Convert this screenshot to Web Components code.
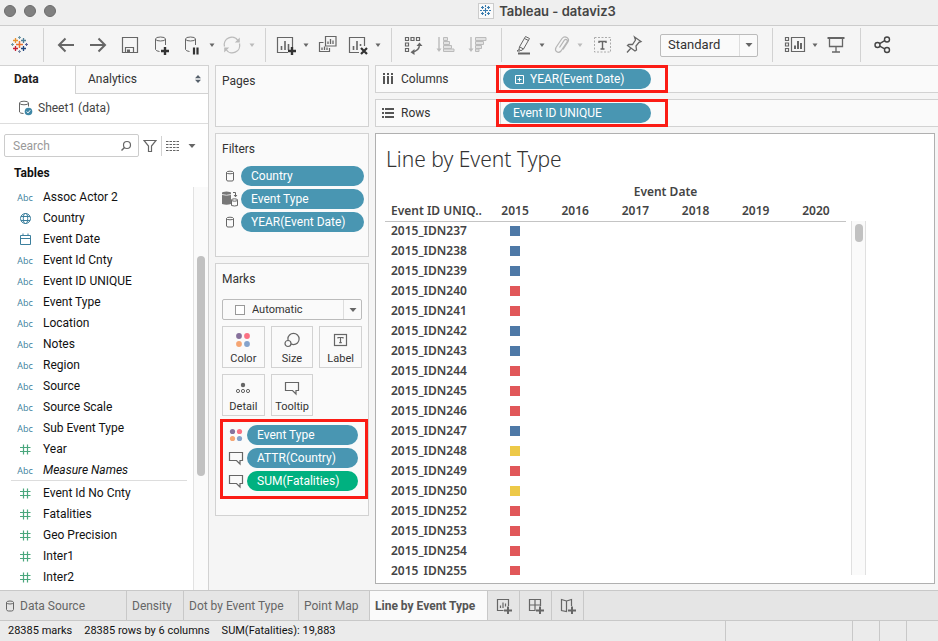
<!DOCTYPE html>
<html lang="en">
<head>
<meta charset="utf-8">
<title>Tableau - dataviz3</title>
<style>
  html, body { height: 100%; margin: 0; }
  body { font: 12px/16px Roboto, "Liberation Sans", sans-serif; color: #333; background: #f5f5f5; overflow: hidden; }
</style>
</head>
<body>
<workbook-app></workbook-app>

<script>
const ICONS = {
  app: [24, 24, `<path stroke="#eb7330" stroke-width="1.500" d="M12.500 8v7M9 11.500h7"/><g stroke-width="1.300">
    <path stroke="#e8912d" d="M8.500 5v5M6 7.500h5"/><path stroke="#4f7f97" d="M16.500 5v5M14 7.500h5"/>
    <path stroke="#c72035" d="M8.500 13v5M6 15.500h5"/><path stroke="#1f457e" d="M16.500 13v5M14 15.500h5"/></g>
    <g stroke="#7199a6" stroke-width="1.100"><path d="M12.500 3v3M11 4.500h3M5.500 10v3M4 11.500h3"/><path stroke="#59629a" d="M19.500 10v3M18 11.500h3"/><path stroke="#7c8ba8" d="M12.500 17v3M11 18.500h3"/></g>`],
  doc: [16, 16, `<rect x=".5" y=".5" width="15" height="15" fill="#fafafa" stroke="#ccc"/><g stroke="#3a7cae" stroke-width="1.100"><path d="M7.500 5v5M5 7.500h5M4.500 3v3M3 4.500h3M10.500 3v3M9 4.500h3M4.500 9v3M3 10.500h3M10.500 9v3M9 10.500h3M7.500 2v2M7.500 11v2M2 7.500h2M11 7.500h2"/></g>`],
  back: [24, 24, `<path stroke-width="2" d="M20 12H5M11.500 5.500L5 12l6.500 6.500"/>`],
  forward: [24, 24, `<path stroke-width="2" d="M4 12h15M12.500 5.500L19 12l-6.500 6.500"/>`],
  save: [24, 24, `<path stroke-width="1.200" d="M4.500 4.500h15v15h-15zM7.500 19.500v-5h8v5"/><path fill="#666" stroke="none" d="M9 16.500h3v3H9z"/>`],
  addData: [24, 24, `<ellipse cx="10.500" cy="6" rx="5" ry="2"/><path d="M5.500 6v10.500q.6 1.600 4 2M15.500 6v6"/><path stroke="#333" stroke-width="2.400" d="M15 14v8M11 18h8"/>`],
  pauseData: [24, 24, `<ellipse cx="10.500" cy="6" rx="5" ry="2"/><path d="M5.500 6v10.500q.6 1.600 4 2M15.500 6v6"/><path stroke="#333" stroke-width="2.200" d="M14 14.500v7M17.500 14.500v7"/>`],
  refresh: [24, 24, `<path stroke="#bbb" stroke-width="1.300" d="M4.500 13.500a7.500 7.500 0 0 1 13.500-6M19.500 10.500a7.500 7.500 0 0 1-13.500 6"/><path fill="#bbb" stroke="none" d="M19.800 4.500v5h-5zM4.200 19.500v-5h5z"/>`],
  newSheet: [24, 24, `<path stroke-width="1.200" d="M14 19.500H3.500v-15h15V14"/><path stroke-width="1.600" d="M7.500 17v-4M11 17V8M14.500 17v-6"/><path stroke="#333" stroke-width="2.400" d="M18 14v8M14 18h8"/>`],
  clear: [24, 24, `<path stroke-width="1.200" d="M13 19.500H3.500v-15h15V13"/><path stroke-width="1.600" d="M7.500 17v-4M11 17V8M14.500 13v-2"/><path stroke="#333" stroke-width="2.200" d="M15 15l6 6M21 15l-6 6"/>`],
  duplicate: [24, 24, `<path stroke-width="1.200" d="M9.500 3.500h10.500v9.500H9.500zM7.500 9.500H3.500v9h10V15"/><path stroke-width="1.300" d="M12 11V8.500M14.500 11V6M17 11V7.500M6 17v-2.500M8.500 17v-3.500M11 17v-2.500"/>`],
  swap: [24, 24, `<path stroke-width="1.200" d="M3.500 4.500h3v3h-3zM9 4.500h3v3H9zM14.500 4.500h3v3h-3zM3.500 10h3v3h-3zM3.500 15.500h3v3h-3z"/><path stroke-width="1.400" d="M17.500 11.500q0 6.500-7.500 7.500"/><path fill="#666" stroke="none" d="M14.500 13l3-3.500 3 3.500zM12.500 16L8.500 19.300l4 2.700z"/>`],
  sortUp: [24, 24, `<path stroke="#bbb" stroke-width="1.400" d="M5 4v13"/><path fill="#bbb" stroke="none" d="M2.500 15.500h5L5 19z"/><path stroke="#bbb" fill="#e2e2e2" d="M9.500 4.500h4v3h-4zM9.500 8.500h6v3h-6zM9.500 12.500h8v3h-8zM9.500 16h10.500v2.500H9.500z"/>`],
  sortDown: [24, 24, `<path stroke="#bbb" stroke-width="1.400" d="M5 4v13"/><path fill="#bbb" stroke="none" d="M2.500 15.500h5L5 19z"/><path stroke="#bbb" fill="#e2e2e2" d="M9.500 4.500H20v3H9.500zM9.500 8.500h8v3h-8zM9.500 12.500h6v3h-6zM9.500 16h3.500v2.500H9.500z"/>`],
  highlight: [24, 24, `<path d="M13.500 3.500l4 2-6 10.500-4-2.200zM7.500 13.800l-.5 2.700 2 1.200 2.500-1.700M7 16.500l-2 1.500h3M12.500 5.500l4 2"/><path stroke-width="2" d="M6 20.500h12"/>`],
  clip: [24, 24, `<path stroke="#b5b5b5" stroke-width="1.200" d="M9.500 14.500l5-7.500q1.200-1.200 2.300-.3t.2 2.300l-6 9q-2 2.200-4.200.8t-.8-4.300l6-9q2.200-2.800 4.900-1t1 4.500l-4.900 7.500"/>`],
  text: [24, 24, `<rect x="4.500" y="4.500" width="16" height="14.500" stroke="#aaa" stroke-dasharray="2 1.500"/><path stroke-width="1.400" d="M9 10V8.500h7V10M12.500 8.500v7.500M10.500 16h4"/>`],
  pin: [24, 24, `<path stroke-width="1.300" d="M12.500 4l6.500 4.500-2 .8-3 3.700.5 4-1.500 1L5.500 12.500l1.300-1.200 3.700.2 3-4.500zM9 15l-4 4.500"/>`],
  showMe: [24, 24, `<path stroke-width="1.200" d="M2.500 4.500h3v3h-3zM2.500 10h3v3h-3zM2.500 15.500h3v3h-3zM8.500 4.500h13v14h-13z"/><path stroke-width="2" d="M12 16v-3.500M15 16V8M18 16v-6"/>`],
  present: [24, 24, `<path stroke-width="2" d="M2.500 5h17"/><path stroke-width="1.300" d="M4.500 5v8.500h13V5M11 13.500v5M7 19h8"/>`],
  share: [24, 24, `<g stroke="#444" stroke-width="1.400"><circle cx="16" cy="6.500" r="2.500"/><circle cx="6.500" cy="12" r="2.500"/><circle cx="16" cy="17" r="2.500"/><path d="M8.700 10.700l5-3M8.700 13.200l5 2.600"/></g>`],
  caret: [8, 8, `<path fill="#666" stroke="none" d="M1.500 2.500h5L4 6z"/>`],
  caretOff: [8, 8, `<path fill="#bbb" stroke="none" d="M1.500 2.500h5L4 6z"/>`],
  caretBig: [8, 8, `<path fill="#666" stroke="none" d="M.5 2h7L4 6z"/>`],
  updown: [6, 8, `<path fill="#56606b" stroke="none" d="M0 3.300h6L3 0zM0 4.700h6L3 8z"/>`],
  source: [16, 16, `<ellipse cx="6" cy="3" rx="4.500" ry="1.800"/><path d="M1.500 3v9q.6 1.500 4 1.500M10.500 3v3.500"/><circle cx="10.500" cy="11.500" r="3.800" fill="#3f87a6" stroke="none"/><path stroke="#fff" d="M8.700 11.500l1.300 1.400 2.300-2.700"/>`],
  search: [12, 12, `<circle cx="7" cy="5" r="3.500" stroke-width="1.200"/><path stroke-width="1.400" d="M4.500 7.500L1.500 10.500"/>`],
  funnel: [14, 14, `<path stroke-width="1.200" d="M1 1.500h12L8.500 7v5.500h-3V7z"/>`],
  list: [13, 12, `<path stroke="#666" stroke-width="1.200" stroke-dasharray="2.500 1" d="M0 1.500h13M0 4.500h13M0 7.500h13M0 10.500h13"/>`],
  abc: [18, 14, `<text x="9" y="11" text-anchor="middle" font-family="Open Sans, sans-serif" font-size="9" font-weight="500" fill="#3c7f9d" stroke="none">Abc</text>`],
  globe: [18, 14, `<g stroke="#3c7f9d"><circle cx="9.500" cy="7.500" r="5"/><ellipse cx="9.500" cy="7.500" rx="2.200" ry="5"/><path d="M5 5.500h9M5 9.500h9"/></g>`],
  date: [18, 14, `<g stroke="#3c7f9d"><path d="M4.500 3.500h10v9h-10zM4.500 6.500h10M7 1.500v2M12 1.500v2"/></g>`],
  number: [18, 14, `<g stroke="#4aa77d" stroke-width="1.200"><path d="M7.500 2.500v10M11.500 2.500v10M4 5.500h10.500M4 9.500h10.500"/></g>`],
  cyl: [18, 14, `<ellipse cx="8" cy="3.500" rx="3.500" ry="1.300"/><path d="M4.500 3.500v7.500q.3 1 1.500 1h4q1.200 0 1.500-1V3.500"/>`],
  cyls: [18, 16, `<path fill="#777" stroke="none" d="M0 2q0-1.500 4.500-1.500T9 2v11q-4.500 1.500-9 0z"/><path stroke="#ddd" d="M0 3.500q4.500 1.500 9 0"/><path fill="#fafafa" d="M9.500 9v5.500q3 1 6 0V9z"/><ellipse cx="12.500" cy="9" rx="3" ry="1.200" fill="#fafafa"/><path d="M11 1.500h2.500v4M12 4l1.500 1.800L15 4"/>`],
  dots: [18, 16, `<g stroke="none"><circle cx="5" cy="4" r="2.900" fill="#86719b"/><circle cx="13" cy="4" r="2.900" fill="#fa7183"/><circle cx="5" cy="12" r="2.900" fill="#f5a573"/><circle cx="13" cy="12" r="2.900" fill="#84a3cc"/></g>`],
  dotsSmall: [18, 16, `<g stroke="none"><circle cx="5.500" cy="4.500" r="2.600" fill="#86719b"/><circle cx="12.500" cy="4.500" r="2.600" fill="#fa7183"/><circle cx="5.500" cy="11.500" r="2.600" fill="#f5a573"/><circle cx="12.500" cy="11.500" r="2.600" fill="#84a3cc"/></g>`],
  size: [18, 16, `<circle cx="10.500" cy="7" r="5.600" stroke-width="1.200"/><circle cx="5" cy="11.500" r="3" fill="#fafafa" stroke-width="1.200"/>`],
  label: [18, 16, `<rect x="2.500" y="2.500" width="12" height="11" stroke-width="1.200"/><path stroke-width="1.200" d="M6 6.500v-1h5v1M8.500 5.500v5M7.200 10.700h2.600"/>`],
  detail: [18, 16, `<circle cx="9" cy="5" r="2.200" fill="#666" stroke="none"/><circle cx="4" cy="11" r="1.600"/><circle cx="9" cy="11" r="1.600"/><circle cx="14" cy="11" r="1.600"/>`],
  tooltip: [18, 16, `<path stroke-width="1.200" d="M2.500 2.500h13v8H13v3.500L9.500 10.500h-7z"/>`],
  cols: [12, 12, `<path stroke-width="2" stroke="#555" d="M2 0v2M6 0v2M10 0v2M2 3v8M6 3v8M10 3v8"/>`],
  rows: [12, 12, `<path stroke-width="2" stroke="#555" d="M0 2h2M0 6h2M0 10h2M3 2h9M3 6h9M3 10h9"/>`],
  expand: [9, 9, `<path stroke="#fff" d="M.5.5h8v8h-8zM4.500 2.500v4M2.500 4.500h4"/>`],
  square: [10, 10, `<rect x=".5" y=".5" width="9" height="9" fill="#fff" stroke="#999"/>`],
  tabCyl: [10, 12, `<ellipse cx="5" cy="2.500" rx="3.500" ry="1.500"/><path d="M1.500 2.500v7q.3 1.500 2 1.500h3q1.700 0 2-1.500v-7"/>`],
  tabSheet: [18, 16, `<path stroke-width="1.200" d="M9.500 12.500H3.500v-11h11V8M6.500 10V7.500M9 10V4.500M11.500 8.500V5.500"/><path stroke-width="2" d="M14 8.500v8M10 12.500h8"/>`],
  tabDash: [18, 16, `<path stroke-width="1.200" d="M9.500 12.500h-6v-11h11V8M3.500 7h11M9 1.500v11"/><path stroke-width="2" d="M14 8.500v8M10 12.500h8"/>`],
  tabStory: [18, 16, `<path stroke-width="1.200" d="M8.500 3L3.500 1.500v11L8.500 13.500zM8.500 3l5-1.500V8M8.500 13.500V3"/><path stroke-width="2" d="M14 8.500v8M10 12.500h8"/>`]
};

const define = (name, css, html) => {
  const template = document.createElement('template');
  customElements.define(name, class extends HTMLElement {
    connectedCallback() {
      if (this.shadowRoot) return;
      template.innerHTML = `<style>*{box-sizing:border-box}button{font:inherit;color:inherit;background:none;border:0;padding:0;margin:0}${css}</style>${typeof html === 'function' ? html(this) : html}`;
      this.attachShadow({ mode: 'open' }).append(template.content.cloneNode(true));
    }
  });
};

define('ui-icon', `:host{display:inline-flex;flex:none}svg{display:block}`, el => {
  const [w, h, body] = ICONS[el.getAttribute('name')];
  return `<svg width="${w}" height="${h}" viewBox="0 0 ${w} ${h}" fill="none" stroke="#666" aria-hidden="true">${body}</svg>`;
});

define('title-bar', `:host{display:flex;align-items:center;justify-content:center;height:26px;padding-bottom:4px;background:#efefef;border-bottom:1px solid #ccc;position:relative}
  .lights{position:absolute;left:4px;top:5px;display:flex;gap:8px}
  .lights button{width:12px;height:12px;border-radius:6px;background:#808080;border:1px solid #6c6c6c}
  h1{display:flex;align-items:center;gap:5px;margin:0 0 0 156px;font:600 13px/18px Inter,sans-serif;color:#444}`,
  `<div class="lights"><button aria-label="Close"></button><button aria-label="Minimize"></button><button aria-label="Zoom"></button></div>
   <h1><ui-icon name="doc"></ui-icon>Tableau - dataviz3</h1>`);

define('tool-button', `:host{display:inline-flex}button{width:24px;height:24px}`,
  el => `<button aria-label="${el.getAttribute('label')}"><ui-icon name="${el.getAttribute('icon')}"></ui-icon></button>`);

define('tool-split', `:host{display:inline-flex;align-items:center;gap:var(--split-gap,4px);margin:0 -2px}.menu{width:8px;height:24px;display:flex;align-items:center}`,
  el => `<tool-button icon="${el.getAttribute('icon')}" label="${el.getAttribute('label')}"></tool-button>
    <button class="menu" aria-label="${el.getAttribute('label')} options"><ui-icon name="${el.hasAttribute('off') ? 'caretOff' : 'caret'}"></ui-icon></button>`);

define('drop-down', `:host{display:flex;position:relative;height:22px;border:1px solid #bbb;border-radius:2px;background:#fafafa;color:#333}
  select{appearance:none;flex:1;min-width:0;font:inherit;color:inherit;background:none;border:0;padding:0 0 0 7px}
  .arrow{width:18px;border-left:1px solid #ddd;display:flex;align-items:center;justify-content:center}
  .lead{display:flex;align-items:center;padding-left:12px}`,
  el => `${el.hasAttribute('icon') ? `<span class="lead"><ui-icon name="${el.getAttribute('icon')}"></ui-icon></span>` : ''}
    <select aria-label="${el.getAttribute('label')}"><option>${el.getAttribute('value')}</option></select><span class="arrow"><ui-icon name="caretBig"></ui-icon></span>`);

define('tool-bar', `:host{display:flex;height:39px;padding:2px 0 3px;background:#f5f5f5}
  .g{display:flex;align-items:center;gap:8px;padding:0 11px 0 10px;border-right:1px solid #d2d2d2}
  .g:last-child{border:0}.logo{padding:0 12px 0 7px}.wide{padding-left:12px}.fmt{padding-right:14px;--split-gap:2px}
  drop-down{width:98px;margin-left:6px;font-size:13px;height:23px}`,
  `<div class="g logo"><tool-button icon="app" label="Start page"></tool-button></div>
   <div class="g"><tool-button icon="back" label="Undo"></tool-button><tool-button icon="forward" label="Redo"></tool-button><tool-button icon="save" label="Save"></tool-button><tool-button icon="addData" label="New data source"></tool-button><tool-split icon="pauseData" label="Pause updates"></tool-split><tool-split icon="refresh" label="Refresh" off></tool-split></div>
   <div class="g"><tool-split icon="newSheet" label="New worksheet"></tool-split><tool-button icon="duplicate" label="Duplicate"></tool-button><tool-split icon="clear" label="Clear sheet"></tool-split></div>
   <div class="g"><tool-button icon="swap" label="Swap rows and columns"></tool-button><tool-button icon="sortUp" label="Sort ascending"></tool-button><tool-button icon="sortDown" label="Sort descending"></tool-button></div>
   <div class="g wide fmt"><tool-split icon="highlight" label="Highlight"></tool-split><tool-split icon="clip" label="Group members" off></tool-split><tool-button icon="text" label="Show mark labels"></tool-button><tool-button icon="pin" label="Fix axes"></tool-button><drop-down label="Fit" value="Standard"></drop-down></div>
   <div class="g wide"><tool-split icon="showMe" label="Show Me"></tool-split><tool-button icon="present" label="Presentation mode"></tool-button></div>
   <div class="g"><tool-button icon="share" label="Share"></tool-button></div>`);

define('data-field', `:host{display:flex;align-items:center;height:21px;padding-left:16px;gap:9px;color:#111}ui-icon{margin-top:1px}`,
  el => `<ui-icon name="${el.getAttribute('type')}"></ui-icon><slot></slot>`);

const fields = [['abc','Assoc Actor 2'],['globe','Country'],['date','Event Date'],['abc','Event Id Cnty'],['abc','Event ID UNIQUE'],['abc','Event Type'],['abc','Location'],['abc','Notes'],['abc','Region'],['abc','Source'],['abc','Source Scale'],['abc','Sub Event Type'],['number','Year'],['abc','<i>Measure Names</i>']];
const measures = ['Event Id No Cnty','Fatalities','Geo Precision','Inter1','Inter2'];

define('data-pane', `:host{display:flex;flex-direction:column;background:#fff;border:solid #d2d2d2;border-width:1px 1px 0 0;min-height:0;overflow:hidden}
  .tabs{display:flex;height:28px;flex:none}
  .tabs button{text-align:left;padding-bottom:2px}
  .data{width:75px;padding-left:14px;font-weight:700;color:#222}
  .analytics{flex:1;display:flex;align-items:center;justify-content:space-between;padding:0 7px 2px 12px;background:#fafafa;border:solid #d2d2d2;border-width:0 0 1px 1px}
  .src{display:flex;align-items:center;gap:4px;height:30px;flex:none;padding:0 0 2px 18px;border-bottom:1px solid #ddd;color:#444}
  .find{display:flex;align-items:center;padding:10px 12px 0 4px;flex:none}
  label{display:flex;align-items:center;width:135px;height:23px;border:1px solid #ccc;border-radius:2px;padding:0 6px 0 8px}
  input{flex:1;min-width:0;border:0;padding:0;font:inherit;background:none;outline:0}input::placeholder{color:#999;opacity:1}
  .find button{display:flex}.f{padding:0 4px}.l{border-left:1px solid #d2d2d2;padding:4px 10px 4px 4px;align-items:center;gap:9px}
  h2{margin:8px 0 0;padding-left:14px;font-size:12px;line-height:16px;font-weight:700;color:#111;flex:none}
  .body{display:flex;flex:1;min-height:0;margin-top:6px}
  .list{flex:1;min-width:0;overflow:hidden;margin-top:-1px}hr{margin:0 6px 1px 11px;border:0;border-top:1px solid #ddd}
  .track{width:15px;background:#fafafa;border-left:1px solid #e2e2e2;padding:69px 0 0 3px}
  .thumb{width:8px;height:220px;border-radius:4px;background:#c1c1c1}`,
  `<div class="tabs"><button class="data">Data</button><button class="analytics">Analytics<ui-icon name="updown"></ui-icon></button></div>
   <div class="src"><ui-icon name="source"></ui-icon>Sheet1 (data)</div>
   <div class="find"><label><input type="text" placeholder="Search" aria-label="Search"><ui-icon name="search"></ui-icon></label>
     <button class="f" aria-label="Filter fields"><ui-icon name="funnel"></ui-icon></button><button class="l" aria-label="View as"><ui-icon name="list"></ui-icon><ui-icon name="caretBig"></ui-icon></button></div>
   <h2>Tables</h2>
   <div class="body"><div class="list">${fields.map(([t, n]) => `<data-field type="${t}">${n}</data-field>`).join('')}<hr>${measures.map(n => `<data-field type="number">${n}</data-field>`).join('')}</div>
   <div class="track"><div class="thumb"></div></div></div>`);

define('field-pill', `:host{display:flex;align-items:center;height:20px;border-radius:10px;background:var(--pill,#4996b2);color:#fff;padding:0 10px;gap:6px}ui-icon{margin-left:2px}`,
  el => `${el.hasAttribute('icon') ? `<ui-icon name="${el.getAttribute('icon')}"></ui-icon>` : ''}<slot></slot>`);

define('shelf-card', `:host{display:block;background:#fafafa;border:1px solid #d2d2d2;padding:8px 4px 0 6px}
  h2{margin:0;font-size:12px;line-height:14px;font-weight:400;color:#333}`,
  `<h2><slot name="title"></slot></h2><slot></slot>`);

define('pill-row', `:host{display:flex;align-items:center;height:20px;margin-bottom:3px}
  ui-icon{margin-right:var(--row-gap,1px)}::slotted(*){flex:1}`,
  el => `<ui-icon name="${el.getAttribute('icon')}"></ui-icon><slot></slot>`);

define('mark-button', `:host{display:block}button{width:100%;height:42px;border:1px solid #d2d2d2;display:flex;flex-direction:column;align-items:center;gap:3px;padding:5px 0 0;font-size:11px;line-height:16px;color:#333}`,
  el => `<button><ui-icon name="${el.getAttribute('icon')}"></ui-icon><slot></slot></button>`);

define('call-out', `:host{display:block;border:3px solid #fb1c15}`, `<slot></slot>`);

define('shelf-column', `:host{display:flex;flex-direction:column;gap:6px}
  .pages{height:62px}.filters{height:124px}.marks{height:253px}
  .list{padding-top:10px}
  drop-down{height:21px;margin:13px 2px 6px 0;font-size:11px}
  .grid{display:grid;grid-template-columns:repeat(3,1fr);gap:6px;margin-right:2px}
  call-out{margin:3px -4px 0 -2px;padding:3px 7px 2px 4px}
  .card-rows{--row-gap:2px}
  .green{--pill:#00b180}`,
  `<shelf-card class="pages"><span slot="title">Pages</span></shelf-card>
   <shelf-card class="filters"><span slot="title">Filters</span><div class="list">
     <pill-row icon="cyl"><field-pill>Country</field-pill></pill-row><pill-row icon="cyls"><field-pill>Event Type</field-pill></pill-row><pill-row icon="cyl"><field-pill>YEAR(Event Date)</field-pill></pill-row></div></shelf-card>
   <shelf-card class="marks"><span slot="title">Marks</span>
     <drop-down icon="square" label="Mark type" value="Automatic"></drop-down>
     <div class="grid"><mark-button icon="dots">Color</mark-button><mark-button icon="size">Size</mark-button><mark-button icon="label">Label</mark-button><mark-button icon="detail">Detail</mark-button><mark-button icon="tooltip">Tooltip</mark-button></div>
     <call-out class="card-rows"><pill-row icon="dotsSmall"><field-pill>Event Type</field-pill></pill-row><pill-row icon="tooltip"><field-pill>ATTR(Country)</field-pill></pill-row><pill-row icon="tooltip"><field-pill class="green">SUM(Fatalities)</field-pill></pill-row></call-out>
   </shelf-card>`);

define('axis-shelf', `:host{display:flex;height:28px;background:#fafafa;border:solid #d2d2d2;border-width:1px 0 1px 1px}
  .name{display:flex;align-items:center;gap:7px;width:120px;padding-left:6px;color:#333}
  call-out{width:172px;margin:-1px 0}
  .slot{border-left:1px solid #d2d2d2;margin-left:1px;padding:0 14px 0 2px;height:22px;display:grid;align-items:center}`,
  el => `<div class="name"><ui-icon name="${el.getAttribute('icon')}"></ui-icon>${el.getAttribute('label')}</div><call-out><div class="slot"><slot></slot></div></call-out>`);

const marks = { b: '#4e79a7', r: '#e15759', y: '#edc948' };
const rows = [237,238,239,240,241,242,243,244,245,246,247,248,249,250,252,253,254,255].map((n, i) => [`2015_IDN${n}`, 'bbbrrbbrrrbyryrrrr'[i]]);

define('sheet-view', `:host{display:flex;flex-direction:column;background:#fff;border:1px solid #b0b0b0;padding:11px 0 8px 9px;min-height:0;color:#333}
  h2{margin:0 0 9px 1px;font:300 21px/28px "Noto Sans",sans-serif;color:#333}
  .view{display:flex;flex:1;min-height:0;gap:5px}
  .clip{flex:none;overflow:hidden}
  table{border-collapse:collapse;table-layout:fixed;width:461px;font:600 12px/16px "Noto Sans",sans-serif;color:#444}
  col:first-child{width:100px}th,td{padding:0;height:20px;font-weight:inherit}
  thead tr:last-child th{border-bottom:1px solid #c4c4c4;height:19px}
  .corner,tbody th{text-align:left;padding-left:6px}
  i{display:block;width:10px;height:10px;margin:0 auto;background:var(--c)}
  .track{width:15px;margin-top:39px;background:#fafafa;border:solid #e0e0e0;border-width:0 1px;padding:3px 0 0 3px}
  .thumb{width:8px;height:18px;border-radius:4px;background:#c1c1c1}`,
  `<h2>Line by Event Type</h2><div class="view"><div class="clip"><table><colgroup><col><col span="6"></colgroup>
    <thead><tr><th></th><th colspan="6">Event Date</th></tr><tr><th class="corner">Event ID UNIQ..</th>${[2015,2016,2017,2018,2019,2020].map(y => `<th>${y}</th>`).join('')}</tr></thead>
    <tbody>${rows.map(([n, c]) => `<tr><th>${n}</th><td><i style="--c:${marks[c]}"></i></td><td></td><td></td><td></td><td></td><td></td></tr>`).join('')}</tbody></table></div>
    <div class="track"><div class="thumb"></div></div></div>`);

define('sheet-tabs', `:host{display:flex;height:31px;background:#e5e5e5;border:solid #c8c8c8;border-width:1px 0;color:#666}
  button{display:flex;align-items:center;padding:0 6px 0 5px;border-right:1px solid #c8c8c8}
  .ds{width:127px;gap:5px}.on{background:#fafafa;font-weight:700;color:#555}.new{padding:0 7px 0 6px}
  .d{width:57px}.p{width:115px}.m{width:71px}.on{width:118px}`,
  `<button class="ds"><ui-icon name="tabCyl"></ui-icon>Data Source</button><button class="d">Density</button><button class="p">Dot by Event Type</button><button class="m">Point Map</button><button class="on">Line by Event Type</button>
   <button class="new" aria-label="New worksheet"><ui-icon name="tabSheet"></ui-icon></button><button class="new" aria-label="New dashboard"><ui-icon name="tabDash"></ui-icon></button><button class="new" aria-label="New story"><ui-icon name="tabStory"></ui-icon></button>`);

define('status-bar', `:host{display:flex;height:20px;background:#ebebeb;font-size:11px;line-height:20px;color:#111}
  .t{display:flex;flex:1;gap:12px;padding-left:8px;white-space:nowrap}
  .c{width:27px;border-left:1px solid #c8c8c8}.w{width:127px}.e{width:32px}`,
  `<div class="t"><span>28385 marks</span><span>28385 rows by 6 columns</span><span>SUM(Fatalities): 19,883</span></div><div class="c w"></div><div class="c"></div><div class="c"></div><div class="c e"></div>`);

define('workbook-app', `:host{display:grid;grid-template-rows:auto auto minmax(0,1fr) auto auto;height:100vh}
  .work{display:grid;grid-template-columns:209px 154px minmax(0,1fr);min-height:0}
  shelf-column{margin:0 -6px 0 6px}
  .main{display:flex;flex-direction:column;gap:6px;min-height:0;padding:0 0 6px 12px}
  sheet-view{flex:1;margin-right:3px}`,
  `<title-bar></title-bar><tool-bar></tool-bar>
   <div class="work"><data-pane></data-pane><shelf-column></shelf-column>
   <div class="main"><axis-shelf icon="cols" label="Columns"><field-pill icon="expand">YEAR(Event Date)</field-pill></axis-shelf><axis-shelf icon="rows" label="Rows"><field-pill>Event ID UNIQUE</field-pill></axis-shelf><sheet-view></sheet-view></div></div>
   <sheet-tabs></sheet-tabs><status-bar></status-bar>`);
</script>
</body>
</html>
